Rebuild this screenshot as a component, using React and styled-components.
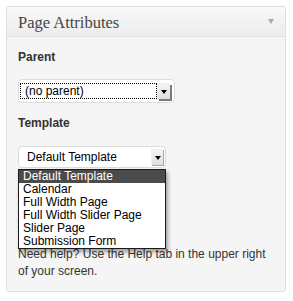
import React from 'react';
import styled, { createGlobalStyle } from 'styled-components';

const GlobalStyle = createGlobalStyle`
  body {
    margin: 0;
    background: #fff;
    font-family: "Liberation Sans", Arial, sans-serif;
  }
`;

const Panel = styled.div`
  margin: 6px 7px 0 6px;
  border: 1px solid #dfdfdf;
  border-radius: 3px;
  background: #f5f5f5;
  box-shadow: inset 0 1px 0 #fff;
`;

const Header = styled.div`
  height: 29px;
  display: flex;
  align-items: center;
  justify-content: space-between;
  padding: 0 11px 0 11px;
  border-bottom: 1px solid #dfdfdf;
  border-radius: 3px 3px 0 0;
  background: linear-gradient(to bottom, #f9f9f9, #ececec);
`;

const Title = styled.h3`
  margin: 0;
  font-family: "Liberation Serif", Georgia, serif;
  font-weight: normal;
  font-size: 16.5px;
  color: #464646;
  line-height: 29px;
  padding-top: 1px;
`;

const Toggle = styled.span`
  width: 0;
  height: 0;
  border-left: 3.5px solid transparent;
  border-right: 3.5px solid transparent;
  border-top: 5px solid #aaa;
`;

const Body = styled.div`
  padding: 12px 11px 11px 11px;
`;

const Label = styled.p`
  margin: ${p => p.top || 0}px 0 0 0;
  font-weight: bold;
  font-size: 12px;
  line-height: 16px;
  color: #333;
`;

const SelectBox = styled.div`
  position: relative;
  display: flex;
  align-items: ${p => (p.focused ? 'stretch' : 'center')};
  width: ${p => p.width}px;
  height: ${p => p.height}px;
  box-sizing: border-box;
  margin-top: ${p => p.top}px;
  padding: ${p => p.pad};
  border: 1px solid #dcdcdc;
  border-radius: 4px;
  background: #fff;
  font-size: 12px;
  color: #000;
`;

const SelectText = styled.div`
  flex: 1;
  display: flex;
  align-items: center;
  padding-left: ${p => p.indent}px;
  border: ${p => (p.focused ? '1px dotted #000' : '1px solid transparent')};
  line-height: 14px;
`;

const ArrowButton = styled.div`
  display: flex;
  align-items: center;
  justify-content: center;
  width: ${p => p.w}px;
  height: ${p => p.h}px;
  box-sizing: border-box;
  background: linear-gradient(to bottom, #f4f4f4, #dedede);
  border-left: 1px solid #eee;
  border-top: 1px solid #eee;
  box-shadow: ${p => (p.dark ? '2px 2px 0 #7a7a7a' : '1px 1px 0 #a8a8a8')};
  margin-right: ${p => (p.dark ? 2 : 1)}px;
`;

const ArrowGlyph = styled.span`
  width: 0;
  height: 0;
  border-left: 3px solid transparent;
  border-right: 3px solid transparent;
  border-top: 4px solid #000;
`;

const Dropdown = styled.ul`
  position: absolute;
  z-index: 2;
  top: calc(100% + 2px);
  left: -1px;
  width: 148px;
  box-sizing: border-box;
  margin: 0;
  padding: 0;
  list-style: none;
  background: #fff;
  border: 1px solid #1a1a1a;
  box-shadow: 2px 3px 4px rgba(0, 0, 0, 0.35);
`;

const Option = styled.li`
  height: 13px;
  line-height: 13px;
  padding-left: 4px;
  font-size: 12px;
  color: ${p => (p.selected ? '#fff' : '#000')};
  background: ${p => (p.selected ? '#4b4b4b' : 'transparent')};
  white-space: nowrap;
`;

const Help = styled.p`
  margin: 78px 0 0 0;
  font-size: 12px;
  line-height: 17px;
  color: #333;
`;

const templates = [
  'Default Template',
  'Calendar',
  'Full Width Page',
  'Full Width Slider Page',
  'Slider Page',
  'Submission Form',
];

export default function App() {
  return (
    <>
      <GlobalStyle />
      <Panel>
        <Header>
          <Title>Page Attributes</Title>
          <Toggle />
        </Header>
        <Body>
          <Label>Parent</Label>
          <SelectBox width={157} height={24} top={14} pad="3px 2px 3px 1px" focused>
            <SelectText indent={4} focused>(no parent)</SelectText>
            <ArrowButton w={13} h={16} dark>
              <ArrowGlyph />
            </ArrowButton>
          </SelectBox>

          <Label top={12}>Template</Label>
          <SelectBox width={148} height={22} top={15} pad="0 1px 0 1px">
            <SelectText indent={6}>Default Template</SelectText>
            <ArrowButton w={12} h={16}>
              <ArrowGlyph />
            </ArrowButton>
            <Dropdown>
              {templates.map((t, i) => (
                <Option key={t} selected={i === 0}>{t}</Option>
              ))}
            </Dropdown>
          </SelectBox>

          <Help>Need help? Use the Help tab in the upper right of your screen.</Help>
        </Body>
      </Panel>
    </>
  );
}
